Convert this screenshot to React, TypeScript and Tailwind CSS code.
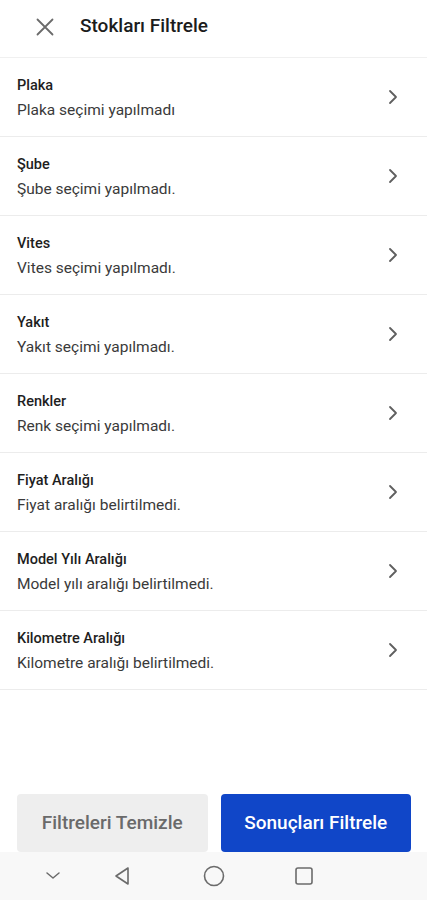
import React from 'react';

const filters = [
  { title: 'Plaka', desc: 'Plaka seçimi yapılmadı' },
  { title: 'Şube', desc: 'Şube seçimi yapılmadı.' },
  { title: 'Vites', desc: 'Vites seçimi yapılmadı.' },
  { title: 'Yakıt', desc: 'Yakıt seçimi yapılmadı.' },
  { title: 'Renkler', desc: 'Renk seçimi yapılmadı.' },
  { title: 'Fiyat Aralığı', desc: 'Fiyat aralığı belirtilmedi.' },
  { title: 'Model Yılı Aralığı', desc: 'Model yılı aralığı belirtilmedi.' },
  { title: 'Kilometre Aralığı', desc: 'Kilometre aralığı belirtilmedi.' },
];

const ChevronRight = () => (
  <svg width="14" height="16" viewBox="0 0 14 16" fill="none">
    <path d="M4 2 L10 8 L4 14" stroke="#5f5f5f" strokeWidth="1.8" strokeLinecap="round" strokeLinejoin="round" />
  </svg>
);

const App = () => {
  return (
    <div className="flex h-[900px] w-full flex-col bg-white font-['Roboto',sans-serif]">
      {/* header */}
      <div className="flex h-[58px] items-center border-b border-[#f0f0f0] pb-[4px]">
        <button className="ml-[34px] flex h-[22px] w-[22px] items-center justify-center">
          <svg width="20" height="20" viewBox="0 0 20 20" fill="none">
            <path d="M2.5 2.5 L17.5 17.5 M17.5 2.5 L2.5 17.5" stroke="#6b6b6b" strokeWidth="1.8" strokeLinecap="round" />
          </svg>
        </button>
        <h1 className="ml-[24px] text-[19px] font-medium text-[#1c1c1c]">Stokları Filtrele</h1>
      </div>

      {/* list */}
      <div className="flex-1">
        {filters.map((f) => (
          <div key={f.title} className="flex h-[79px] items-center justify-between border-b border-[#ececec] pl-[17px] pr-[27px]">
            <div className="flex flex-col pt-[1px]">
              <span className="text-[14.5px] font-medium leading-[20px] text-[#1e1e1e]">{f.title}</span>
              <span className="mt-[4px] text-[15.5px] leading-[20px] text-[#3a3a3a]">{f.desc}</span>
            </div>
            <ChevronRight />
          </div>
        ))}
      </div>

      {/* actions */}
      <div className="flex gap-[13px] px-[17px] pr-[16px]">
        <button className="flex h-[58px] flex-1 items-center justify-center rounded-[4px] bg-[#eeeeee] text-[19px] font-medium text-[#6a6a6a]">
          Filtreleri Temizle
        </button>
        <button className="flex h-[58px] flex-1 items-center justify-center rounded-[4px] bg-[#1046c8] text-[19px] font-medium text-white">
          Sonuçları Filtrele
        </button>
      </div>

      {/* system nav bar */}
      <div className="flex h-[48px] items-center bg-[#f8f8f8]">
        <div className="ml-[45px] flex w-[16px] justify-center">
          <svg width="16" height="10" viewBox="0 0 16 10" fill="none">
            <path d="M2 2 L8 7 L14 2" stroke="#6b6b6b" strokeWidth="1.5" strokeLinecap="round" strokeLinejoin="round" />
          </svg>
        </div>
        <div className="ml-[52px] flex">
          <svg width="20" height="20" viewBox="0 0 20 20" fill="none">
            <path d="M15 2 L15 18 L3 10 Z" stroke="#6b6b6b" strokeWidth="1.6" strokeLinejoin="round" />
          </svg>
        </div>
        <div className="ml-[70px] flex">
          <svg width="22" height="22" viewBox="0 0 22 22" fill="none">
            <circle cx="11" cy="11" r="9.5" stroke="#6b6b6b" strokeWidth="1.6" />
          </svg>
        </div>
        <div className="ml-[69px] flex">
          <svg width="20" height="20" viewBox="0 0 20 20" fill="none">
            <rect x="2" y="2" width="16" height="16" rx="2" stroke="#6b6b6b" strokeWidth="1.6" />
          </svg>
        </div>
      </div>
    </div>
  );
};

export default App;
